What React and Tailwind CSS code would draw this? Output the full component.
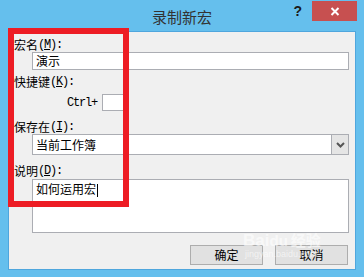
import React from "react";

const cjk = { fontFamily: '"Noto Sans CJK SC", "Noto Sans", sans-serif' };
const mono = { fontFamily: '"Liberation Mono", "DejaVu Sans Mono", monospace' };

function Label({ text, k }) {
  return (
    <div className="h-[14px] text-[12px] leading-[14px] text-[#000] flex items-center" style={cjk}>
      <span>{text}</span>
      <span style={mono} className="tracking-[-1.2px]">(</span>
      <span style={mono} className="underline underline-offset-[1px] tracking-[-1.2px]">{k}</span>
      <span style={mono} className="tracking-[-1.2px]">):</span>
    </div>
  );
}

export default function App() {
  return (
    <div className="relative w-[364px] h-[277px] bg-[#65bfed] overflow-hidden" style={cjk}>
      {/* title bar */}
      <div className="h-[31px] grid grid-cols-[1fr_auto_1fr]">
        <div />
        <div className="flex items-center text-[15px] text-[#333] leading-none pt-[1px]">录制新宏</div>
        <div className="flex justify-end items-start pt-[1px] pr-[7px]">
          <div
            className="h-[20px] flex items-center text-[14px] font-bold text-[#1a1a1a] mr-[10px]"
            style={{ fontFamily: '"Liberation Sans", Arial, sans-serif' }}
          >
            ?
          </div>
          <div className="w-[45px] h-[20px] bg-[#c75050] flex items-center justify-center">
            <svg width="10" height="9" viewBox="0 0 10 9">
              <path d="M1.5 1 L8.5 8 M8.5 1 L1.5 8" stroke="#fff" strokeWidth="2" />
            </svg>
          </div>
        </div>
      </div>

      {/* client area */}
      <div className="mx-[8px] h-[239px] bg-[#f0f0f0] border border-[#4fa6dd] pl-[5px] pr-[6px] flex flex-col">
        <div className="mt-[6px]">
          <Label text="宏名" k="M" />
        </div>
        <div className="ml-[18px] h-[18px] bg-white border border-[#abadb3] flex items-center pl-[3px] text-[12px]">
          演示
        </div>

        <div className="mt-[5px]">
          <Label text="快捷键" k="K" />
        </div>
        <div className="mt-[5px] h-[17px] flex items-center">
          <span className="ml-[53px] text-[12px] tracking-[-1.2px] text-black" style={mono}>
            Ctrl+
          </span>
          <div className="ml-[5px] w-[24px] h-[17px] bg-white border border-[#abadb3]" />
        </div>

        <div className="mt-[9px]">
          <Label text="保存在" k="I" />
        </div>
        <div className="ml-[18px] h-[21px] bg-white border border-[#abadb3] flex items-center">
          <span className="pl-[3px] text-[12px] flex-1">当前工作簿</span>
          <div className="w-[17px] h-full bg-[#e5e5e5] border-l border-[#abadb3] flex items-center justify-center">
            <svg width="9" height="6" viewBox="0 0 9 6">
              <path d="M1 1 L4.5 4.5 L8 1" stroke="#555" strokeWidth="2" fill="none" />
            </svg>
          </div>
        </div>

        <div className="mt-[9px]">
          <Label text="说明" k="D" />
        </div>
        <div className="mt-[1px] ml-[18px] h-[54px] bg-white border border-[#abadb3] pl-[3px] pt-[2px] text-[12px] leading-[14px]">
          <span>如何运用宏</span>
          <span className="inline-block w-[1px] h-[13px] bg-black align-middle ml-[1px]" />
        </div>

        <div className="mt-[12px] flex justify-end gap-[12px] pr-[1px]">
          <div className="w-[73px] h-[20px] bg-[#e1e1e1] border border-[#adadad] flex items-center justify-center text-[12px] text-black">
            确定
          </div>
          <div className="w-[73px] h-[20px] bg-[#e1e1e1] border border-[#adadad] flex items-center justify-center text-[12px] text-black">
            取消
          </div>
        </div>
      </div>

      {/* red annotation rectangle */}
      <div className="absolute left-[8px] top-[28px] w-[121px] h-[179px] border-[6px] border-[#ed1c24] pointer-events-none" />

      {/* watermark */}
      <div className="absolute left-[243px] top-[232px] pointer-events-none text-white/60 leading-none">
        <div className="text-[17px] font-bold" style={{ fontFamily: '"Liberation Sans", Arial, sans-serif' }}>
          Bai<span className="text-[15px]">du</span>
          <span className="text-[15px] ml-[3px]" style={cjk}>经验</span>
        </div>
        <div className="text-[9px] mt-[1px] ml-[2px]" style={{ fontFamily: '"Liberation Sans", Arial, sans-serif' }}>
          jingyan.baidu.com
        </div>
      </div>
    </div>
  );
}
